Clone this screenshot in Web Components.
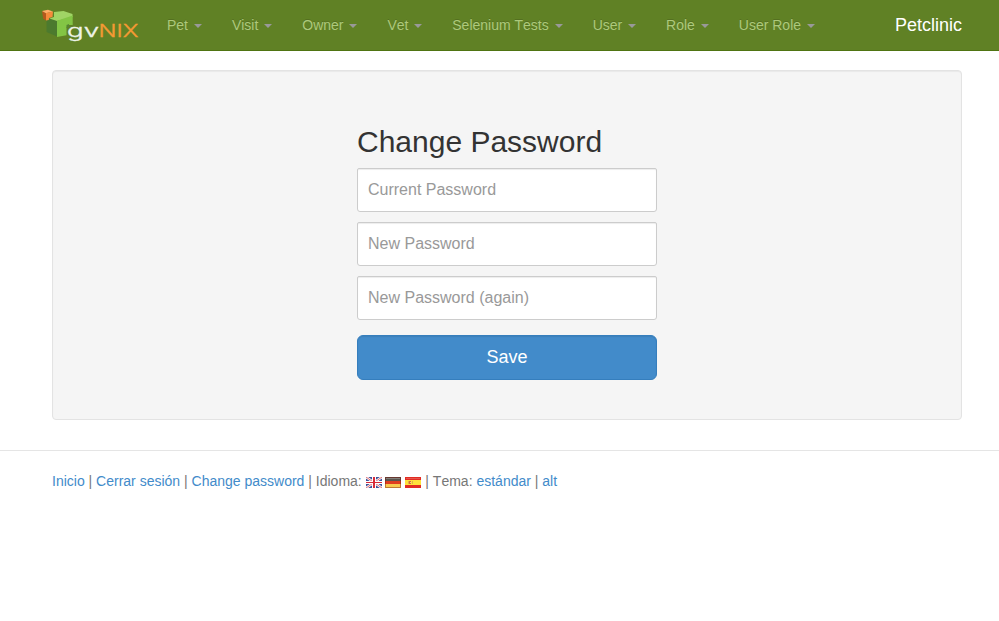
<!DOCTYPE html>
<html lang="es"><head><meta charset="utf-8"><title>Petclinic</title>
<style>html,body{margin:0;background:#fff}body{font:14px/20px "Liberation Sans",Arial,sans-serif;font-kerning:none;color:#333}</style></head><body>
<pet-page></pet-page>
<script>
const define=(name,html)=>customElements.define(name,class extends HTMLElement{
  constructor(){super();const t=document.createElement('template');t.innerHTML=html;this.attachShadow({mode:'open'}).append(t.content.cloneNode(true));}
});
define('gv-logo',`<style>:host{display:block;width:100px;height:34px}svg{display:block}</style>
<svg width="100" height="34" viewBox="42 8 100 34">
<path d="M46.5 20L50 18.5L57 20.5V36.5L46.5 32Z" fill="#4c7a2e"/>
<path d="M54 12L63.5 11L72.5 14V17L57 21L49.5 18.5L54 17Z" fill="#a0d465"/>
<path d="M57 20.8L72.7 15.5V25H69L66.5 27V35.3L57 37Z" fill="#83c545"/>
<path d="M66.5 25L69 24V27L66.5 28Z" fill="#558632"/>
<path d="M42 11L46 13V20.5L43.2 18.8Z" fill="#b3591d"/>
<path d="M42 11L48 9.8L53 11.5L46 13.2Z" fill="#ffae69"/>
<path d="M46 13L53 11.5L52.5 17L49 18L48.8 20L46 20.5Z" fill="#f58b3b"/>
<g font-family="Inter,sans-serif" font-size="17.5" font-weight="300" stroke-width=".35"><text x="67" y="36.6" textLength="32" lengthAdjust="spacingAndGlyphs" fill="#eef3e9" stroke="#eef3e9">gv</text><text x="98.5" y="37" textLength="40" lengthAdjust="spacingAndGlyphs" fill="#f69a34" stroke="#f69a34">NIX</text></g></svg>`);
define('nav-item',`<style>:host{display:block;padding:15px;color:#adc97c;text-shadow:0 -1px 0 rgba(0,0,0,.15);white-space:nowrap}
i{display:inline-block;margin-left:2px;vertical-align:middle;border:4px solid transparent;border-top-color:#999;border-bottom:0}</style><slot></slot> <i></i>`);
define('nav-bar',`<style>:host{display:flex;height:50px;background:#608125;border-bottom:1px solid #4f7412;align-items:center;padding:0 37px 0 42px}
nav{display:flex;margin-left:10px}b{font:18px/20px "Liberation Sans",Arial,sans-serif;font-kerning:none;color:#fff;margin-left:auto}</style>
<gv-logo></gv-logo><nav><nav-item>Pet</nav-item><nav-item>Visit</nav-item><nav-item>Owner</nav-item><nav-item>Vet</nav-item><nav-item>Selenium Tests</nav-item><nav-item>User</nav-item><nav-item>Role</nav-item><nav-item>User Role</nav-item></nav><b>Petclinic</b>`);
define('password-form',`<style>:host{display:block;box-sizing:border-box;height:350px;margin:19px 37px 30px 52px;padding:53px 0 0 304px;background:#f5f5f5;border:1px solid #e3e3e3;border-radius:4px;box-shadow:inset 0 1px 1px rgba(0,0,0,.05)}
form{display:flex;flex-direction:column;width:300px}h2{font-size:30px;line-height:33px;font-weight:400;margin:0 0 10px;padding-top:1px}
input{box-sizing:border-box;height:44px;padding:10px;margin:0 0 10px;border:1px solid #ccc;border-radius:2px 2px 3px 3px;font:16px "Liberation Sans",Arial,sans-serif;background:#fff;box-shadow:inset 0 1px 1px rgba(0,0,0,.075);outline:0}
input::placeholder{color:#999;opacity:1}
button{height:45px;margin:5px 0 0;padding:0 0 2px;border:1px solid #357ebd;border-radius:6px;background:#428bca;color:#fff;font:18px/24px "Liberation Sans",Arial,sans-serif;box-shadow:inset 0 1px 1px rgba(0,0,0,.08)}</style>
<form><h2>Change Password</h2><input type="password" placeholder="Current Password"><input type="password" placeholder="New Password"><input type="password" placeholder="New Password (again)"><button type="button">Save</button></form>`);
const flag=(label,body)=>`<svg class="flag" role="img" aria-label="${label}" width="16" height="11" viewBox="0 0 16 11">${body}</svg>`;
define('page-footer',`<style>:host{display:block;border-top:1px solid #e5e5e5;padding:20px 0 0 52px;color:#777;white-space:nowrap}a{color:#428bca}.flag{vertical-align:-2px;margin-right:-.45px}.flag:last-of-type{margin:0 .3px 0 .6px}</style>
<a>Inicio</a> | <a>Cerrar sesión</a> | <a>Change password</a> | Idioma: ${flag('English','<path fill="#3d519b" d="M0 0h16v11H0z"/><path d="M0 0L16 11M16 0L0 11" stroke="#fff" stroke-width="2.4"/><path d="M0 0L16 11M16 0L0 11" stroke="#dc5b63" stroke-width=".9"/><path fill="#fff" d="M6 0h4v11H6zM0 4h16v3H0z"/><path fill="#d82a38" d="M7 0h2v11H7zM0 5h16v1H0z"/>')} ${flag('Deutsch','<path fill="#5a554e" d="M0 0h16v4H0z"/><path fill="#df3d20" d="M0 4h16v3H0z"/><path fill="#f7ca50" d="M0 7h16v4H0z"/><path d="M.5.5h15v10H.5z" fill="none" stroke="#7b160e" stroke-opacity=".45"/><path d="M1 1.5h14" stroke="#fff" stroke-opacity=".25"/>')} ${flag('Español','<path fill="#e22c22" d="M0 0h16v11H0z"/><path fill="#ffe23a" d="M0 3h16v5H0z"/><path d="M1 1.5h14" stroke="#fff" stroke-opacity=".2"/><path fill="#e0b04a" d="M3 4h1v3H3zM7 4h1v3H7z"/><path fill="#d86a35" d="M4 4h2v3H4z"/><path fill="#efcf9b" d="M5 5h1v1H5z"/>')} | Tema: <a>estándar</a> | <a>alt</a>`);
define('pet-page',`<style>:host{display:block}</style><nav-bar></nav-bar><password-form></password-form><page-footer></page-footer>`);
</script></body></html>
